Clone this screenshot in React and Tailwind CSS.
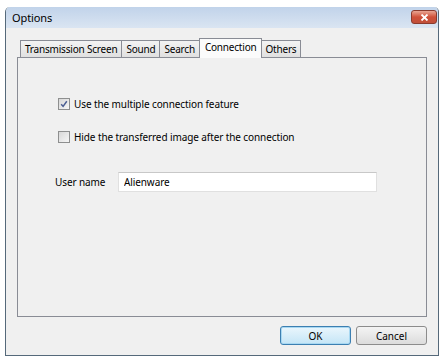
import React, { useState } from 'react';

const tabs = ['Transmission Screen', 'Sound', 'Search', 'Connection', 'Others'];

function Checkbox({ checked, onChange, label }) {
  return (
    <label className="flex items-center gap-[4px] h-[13px] cursor-default" onClick={onChange}>
      <span className="w-[12px] h-[12px] border border-[#8e8f8f] bg-gradient-to-br from-[#d8d8d8] to-[#f6f6f6] flex items-center justify-center">
        {checked && (
          <svg width="8" height="8" viewBox="0 0 8 8">
            <path d="M1.2 4.2 L3.1 6.4 L6.8 1.2" fill="none" stroke="#4b5e92" strokeWidth="1.5" />
          </svg>
        )}
      </span>
      <span className="text-[10px] tracking-[-0.1px] text-black leading-none">{label}</span>
    </label>
  );
}

export default function App() {
  const [active, setActive] = useState('Connection');
  const [multi, setMulti] = useState(true);
  const [hide, setHide] = useState(false);
  const [user, setUser] = useState('Alienware');

  return (
    <div className="w-[443px] h-[359px] bg-white pt-[7px] pl-[5px]" style={{ fontFamily: '"Noto Sans", "Open Sans", sans-serif' }}>
      <div className="w-[434px] h-[349px] flex flex-col border border-t-0 border-[#55697a] rounded-t-[5px] overflow-hidden">
        {/* Title bar */}
        <div className="h-[21px] flex items-start justify-between pl-[6px] pr-[1px] bg-gradient-to-b from-[#c1d3ea] to-[#dae5f2]">
          <span className="text-[11px] tracking-[-0.1px] text-black mt-[3px]">Options</span>
          <button className="w-[26px] h-[14px] mt-[3px] rounded-[3px] border border-[#8a3b2e] bg-gradient-to-b from-[#e8a593] via-[#d0513a] to-[#c0503a] flex items-center justify-center">
            <svg width="9" height="7" viewBox="0 0 9 7">
              <path d="M1.5 0.5 L7.5 6.5 M7.5 0.5 L1.5 6.5" stroke="white" strokeWidth="1.8" />
            </svg>
          </button>
        </div>

        {/* Body */}
        <div className="flex-1 bg-[#f0f0f0] pt-[10px] px-[11px] flex flex-col">
          <div className="flex items-end h-[19px] pl-[3px]">
            {tabs.map((t) => {
              const sel = t === active;
              return (
                <div
                  key={t}
                  onClick={() => setActive(t)}
                  className={
                    sel
                      ? 'relative z-10 h-[20px] -mb-px -mx-[1px] px-[5px] bg-[#fbfbfb] border border-b-0 border-[#898c95] text-[10px] tracking-[-0.2px] text-black flex items-center cursor-default'
                      : 'h-[17px] px-[4px] bg-gradient-to-b from-[#f3f3f3] to-[#e0e0e0] border border-l-0 first:border-l border-b-0 border-[#898c95] text-[10px] tracking-[-0.2px] text-black flex items-center cursor-default'
                  }
                >
                  <span className={sel ? '-mt-[3px]' : ''}>{t}</span>
                </div>
              );
            })}
          </div>

          <div className="h-[260px] border border-[#898c95] bg-[#f0f0f0] pt-[39px] pl-[40px] flex flex-col">
            <Checkbox checked={multi} onChange={() => setMulti(!multi)} label="Use the multiple connection feature" />
            <div className="h-[20px]" />
            <Checkbox checked={hide} onChange={() => setHide(!hide)} label="Hide the transferred image after the connection" />
            <div className="flex items-center mt-[29px] -ml-[3px]">
              <span className="text-[10px] tracking-[-0.1px] text-black w-[63px]">User name</span>
              <input
                value={user}
                onChange={(e) => setUser(e.target.value)}
                className="w-[259px] h-[20px] bg-white border border-[#e0e0e0] border-t-[#c8c8c8] px-[5px] text-[10px] tracking-[-0.1px] text-black outline-none"
              />
            </div>
          </div>

          <div className="flex justify-end gap-[5px] mt-[9px]">
            <button className="w-[71px] h-[19px] rounded-[3px] border border-[#3c7fb1] bg-gradient-to-b from-[#eaf6fd] to-[#c4e5f6] text-[10px] text-black leading-none shadow-[inset_0_0_0_1px_#a8d8f2]">
              OK
            </button>
            <button className="w-[71px] h-[19px] rounded-[3px] border border-[#8c8c8c] bg-gradient-to-b from-[#f4f4f4] to-[#dcdcdc] text-[10px] text-black leading-none">
              Cancel
            </button>
          </div>
        </div>
      </div>
    </div>
  );
}
